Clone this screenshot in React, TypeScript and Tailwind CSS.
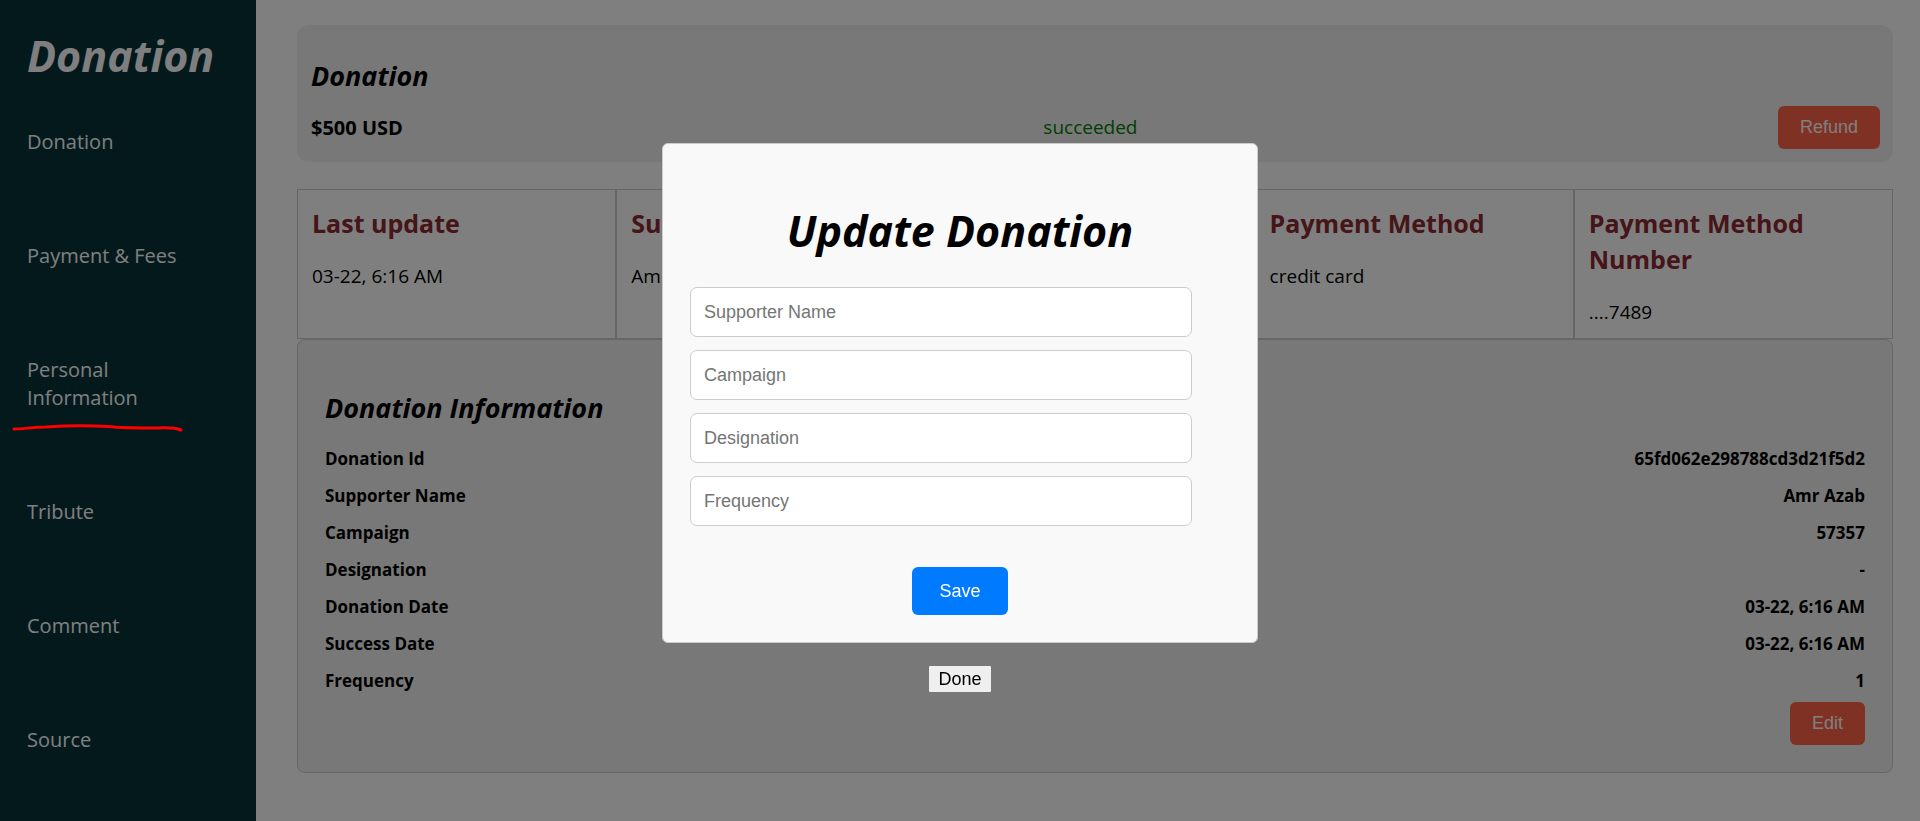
const navItems = ['Donation', 'Payment & Fees', 'Personal Information', 'Tribute', 'Comment', 'Source'];

const summary = [
  { title: 'Last update', value: '03-22, 6:16 AM' },
  { title: 'Supporter', value: 'Amr Azab' },
  { title: '', value: '' },
  { title: 'Payment Method', value: 'credit card' },
  { title: 'Payment Method Number', value: '....7489' },
];

const details = [
  ['Donation Id', '65fd062e298788cd3d21f5d2'],
  ['Supporter Name', 'Amr Azab'],
  ['Campaign', '57357'],
  ['Designation', '-'],
  ['Donation Date', '03-22, 6:16 AM'],
  ['Success Date', '03-22, 6:16 AM'],
  ['Frequency', '1'],
];

const fields = ['Supporter Name', 'Campaign', 'Designation', 'Frequency'];

function Sidebar() {
  return (
    <aside className="w-64 shrink-0 bg-[#063239] px-[27px] pt-7 text-white">
      <h1 className="text-[43px] leading-[56px] font-bold italic">Donation</h1>
      <nav className="mt-11">
        <ul className="flex flex-col gap-[86px]">
          {navItems.map((item) => (
            <li key={item} className="max-w-40 text-xl leading-7">
              <a href="#">{item}</a>
            </li>
          ))}
        </ul>
      </nav>
    </aside>
  );
}

function ActionButton({ label }: { label: string }) {
  return (
    <button
      type="button"
      className="rounded-md bg-[#ff6347] px-[22px] py-[11px] font-['Liberation_Sans',sans-serif] text-lg leading-[21px] font-normal text-white"
    >
      {label}
    </button>
  );
}

function UpdateDialog() {
  return (
    <div className="fixed inset-0 flex flex-col items-center justify-center bg-black/50 pt-[14px]">
      <form
        role="dialog"
        aria-labelledby="dialog-title"
        className="flex w-[596px] max-w-full flex-col rounded-md border border-[#ccc] bg-[#f9f9f9] px-[27px] pt-[59px] pb-[27px] font-['Liberation_Sans',sans-serif] text-lg"
      >
        <h2
          id="dialog-title"
          className="text-center font-['Open_Sans',sans-serif] text-[43px] leading-[56px] font-bold italic"
        >
          Update Donation
        </h2>
        <div className="mt-7 mr-[38px] flex flex-col gap-[13px]">
          {fields.map((field) => (
            <input
              key={field}
              type="text"
              aria-label={field}
              placeholder={field}
              className="h-[50px] rounded-[7px] border border-[#ccc] bg-white px-[13px] placeholder:text-[#757575]"
            />
          ))}
        </div>
        <button
          type="button"
          className="mt-[41px] h-12 self-center rounded-md bg-[#007bff] px-[27px] text-white"
        >
          Save
        </button>
      </form>
      <button
        type="button"
        className="mt-[23px] rounded-[1px] bg-[#efefef] px-[9px] font-['Liberation_Sans',sans-serif] text-lg leading-[26px] text-black"
      >
        Done
      </button>
    </div>
  );
}

export default function App() {
  return (
    <div className="flex min-h-screen bg-white font-['Open_Sans',sans-serif] text-black">
      <Sidebar />
      <main className="min-w-0 flex-1 pt-[25px] pr-[27px] pb-12 pl-[41px]">
        <section className="rounded-xl bg-[#f0f0f0] pt-8 pr-[13px] pb-[13px] pl-[14px]">
          <h2 className="text-[27px] leading-[38px] font-bold italic">Donation</h2>
          <div className="mt-[11px] flex items-center justify-between text-[19px]">
            <span className="text-xl font-bold">$500 USD</span>
            <span className="text-[#008000]">succeeded</span>
            <ActionButton label="Refund" />
          </div>
        </section>

        <section className="mt-[27px] grid grid-cols-5">
          {summary.map(({ title, value }, index) => (
            <div key={index} className="border border-[#ccc] px-[14px] pt-[15px] pb-3">
              <h3 className="text-[25px] leading-9 font-bold text-[#8b2a32]">{title}</h3>
              <p className="mt-[22px] text-[19px] leading-[27px]">{value}</p>
            </div>
          ))}
        </section>

        <section className="rounded-lg border border-[#ccc] bg-[#f0f0f0] px-[27px] pt-[49px] pb-[27px]">
          <h2 className="text-[27px] leading-[38px] font-bold italic">Donation Information</h2>
          <table className="mt-[13px] w-full text-[17px] leading-[37px] font-bold">
            <tbody>
              {details.map(([label, value]) => (
                <tr key={label}>
                  <th scope="row" className="p-0 text-left">
                    {label}
                  </th>
                  <td className="p-0 text-right">{value}</td>
                </tr>
              ))}
            </tbody>
          </table>
          <div className="mt-[3px] flex justify-end">
            <ActionButton label="Edit" />
          </div>
        </section>
      </main>
      <UpdateDialog />
      <svg
        className="absolute top-[420px] left-2 h-4 w-48"
        viewBox="0 0 192 16"
        fill="none"
        stroke="#ff0000"
        strokeWidth="3"
        strokeLinecap="round"
        strokeLinejoin="round"
        aria-hidden="true"
      >
        <path d="M6 9C16 9 24 7 38 7C58 5.500 84 5.500 100 6.500C114 8 130 8 150 8C162 7.500 168 8 173 10" />
      </svg>
    </div>
  );
}
